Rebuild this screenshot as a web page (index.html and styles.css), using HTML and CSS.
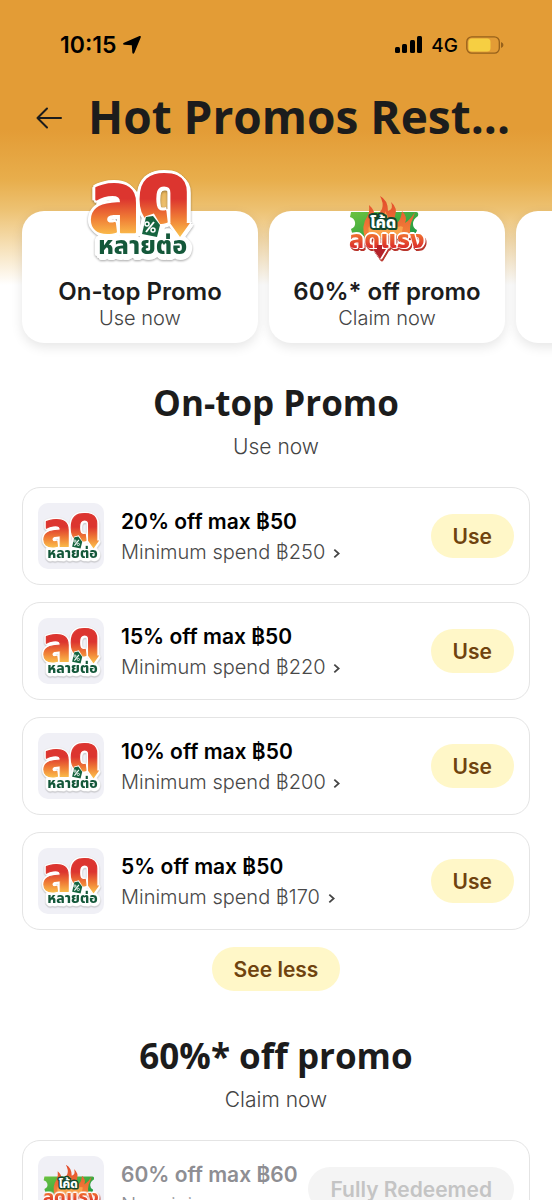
FILE: index.html
```html
<!DOCTYPE html>
<html lang="en">
  <head>
    <meta charset="UTF-8" />
    <meta name="viewport" content="width=device-width, initial-scale=1.0" />
    <title>Hot Promos</title>
    <link rel="stylesheet" href="styles.css">
  </head>
  <body>
    <!-- shared logos -->
    <svg class="defs" width="0" height="0" aria-hidden="true">
      <defs>
        <linearGradient id="redFade" gradientUnits="userSpaceOnUse" x1="0" y1="14" x2="0" y2="76">
          <stop offset="0.4" stop-color="#dc352f" />
          <stop offset="0.7" stop-color="#ef7a35" />
          <stop offset="1" stop-color="#fbc04c" />
        </linearGradient>
        <linearGradient id="flame" x1="0" y1="0" x2="0" y2="1">
          <stop offset="0" stop-color="#e2472a" />
          <stop offset="1" stop-color="#f58a3c" />
        </linearGradient>
        <linearGradient id="ticket" x1="0" y1="0" x2="1" y2="1">
          <stop offset="0" stop-color="#6cc23f" />
          <stop offset="1" stop-color="#149444" />
        </linearGradient>
        <linearGradient id="hot" gradientUnits="userSpaceOnUse" x1="0" y1="50" x2="0" y2="68">
          <stop offset="0" stop-color="#f58232" />
          <stop offset="1" stop-color="#d8262b" />
        </linearGradient>
      </defs>
      <symbol id="logo-ontop" viewBox="15 5 110 100">
        <g class="sticker">
          <text class="thai big-letter" x="19" y="72" font-size="85">ล</text>
          <text class="thai big-letter" x="67" y="62" font-size="85">ด</text>
          <path d="M102 58h13v5h5l-10 14-10-14h2z" fill="url(#redFade)" />
          <path d="M77 58l6-2 6 10-2 10-14-2z" fill="#fff" stroke="#fff" stroke-width="4" />
          <path d="M76 57l7-1 7 9-3 12-15-3z" fill="#16643f" />
          <path d="M84 62l-8 10" stroke="#fff" stroke-width="2" />
          <circle cx="77" cy="64" r="2" fill="none" stroke="#fff" stroke-width="1.5" />
          <circle cx="83" cy="70" r="2" fill="none" stroke="#fff" stroke-width="1.5" />
          <text class="thai small" x="28" y="94" font-size="25" fill="#14583a">หลายต่อ</text>
        </g>
      </symbol>
      <symbol id="logo-code" viewBox="16 12 84 72">
        <path d="M22 31h65q3 0 2 4-5 3-5 8 0 4 4 6l-3 10H25l-3-11q5-2 4-7-1-4-5-5z" fill="url(#ticket)" />
        <path d="M36 58Q32 44 38 36Q41 31 40 24Q46 29 46 37Q50 33 53 28Q55 22 51 15Q59 19 59 30Q65 28 62 21Q69 27 66 35Q65 40 69 41Q72 38 73 30Q79 36 76 42Q82 38 86 31Q84 38 82 42Q80 48 82 56Z" fill="url(#flame)" />
        <path d="M41 56Q37 46 43 40Q45 47 49 43Q57 38 56 30Q62 40 60 45Q66 42 66 48Q70 44 74 46Q72 52 73 58Z" fill="#f9a34c" />
        <text class="thai dark" x="41" y="47" font-size="16">โค้ด</text>
        <g class="sticker red">
          <text class="thai" x="20" y="67" font-size="25" fill="url(#hot)">ลดแรง</text>
          <path d="M48 64h5v4h4l-6 10-7-10h4z" fill="#b5222a" />
        </g>
      </symbol>
    </svg>

    <div class="screen">
      <header class="top">
        <div class="status">
          <div class="status-left">
            <span>10:15</span>
            <svg width="20" height="20" viewBox="0 0 20 20"><path d="M17.500 1Q19.500 0.500 18.700 2.500L12.500 17.500Q11 20 10.300 17.500L9.800 10.300L2.300 9.800Q0 9 2 7.700Z" /></svg>
          </div>
          <div class="status-right">
            <svg width="28" height="18" viewBox="0 0 28 18"><rect x="0" y="11" width="5" height="6" rx="1.500" /><rect x="7" y="8" width="5" height="9" rx="1.500" /><rect x="15" y="4" width="5" height="13" rx="1.500" /><rect x="22" y="0" width="5" height="17" rx="1.500" /></svg>
            <span class="net">4G</span>
            <svg width="38" height="18" viewBox="0 0 38 18"><rect x="0.800" y="0.800" width="32.500" height="16.400" rx="5" fill="none" stroke="#96611b" stroke-width="1.300" /><rect x="2.500" y="2.500" width="22" height="13" rx="3.500" fill="#f6cf42" /><path d="M35 6v6q2.500-1 2.500-3T35 6z" fill="#96611b" /></svg>
          </div>
        </div>
        <div class="title-row">
          <button class="back" aria-label="Back">
            <svg width="26" height="22" viewBox="0 0 26 22"><path d="M11 1.500L1.500 11L11 20.500M1.500 11H25" fill="none" stroke="#1c1c1c" stroke-width="2" stroke-linecap="round" stroke-linejoin="round" /></svg>
          </button>
          <h1>Hot Promos Rest...</h1>
        </div>
      </header>

      <nav class="tabs">
        <a class="tab" href="#ontop">
          <svg class="tab-logo big"><use href="#logo-ontop" /></svg>
          <strong>On-top Promo</strong>
          <span>Use now</span>
        </a>
        <a class="tab" href="#sixty">
          <svg class="tab-logo"><use href="#logo-code" /></svg>
          <strong>60%* off promo</strong>
          <span>Claim now</span>
        </a>
        <a class="tab" href="#more" aria-label="More promos"></a>
      </nav>

      <section class="group" id="ontop">
        <h2>On-top Promo</h2>
        <p class="sub">Use now</p>
        <ul class="coupons">
          <li class="coupon">
            <div class="thumb"><svg><use href="#logo-ontop" /></svg></div>
            <div class="info">
              <h3>20% off max ฿50</h3>
              <p>Minimum spend ฿250 <svg class="chev" viewBox="0 0 8 12"><path d="M1.500 1.500L6.500 6L1.500 10.500" /></svg></p>
            </div>
            <button class="pill">Use</button>
          </li>
          <li class="coupon">
            <div class="thumb"><svg><use href="#logo-ontop" /></svg></div>
            <div class="info">
              <h3>15% off max ฿50</h3>
              <p>Minimum spend ฿220 <svg class="chev" viewBox="0 0 8 12"><path d="M1.500 1.500L6.500 6L1.500 10.500" /></svg></p>
            </div>
            <button class="pill">Use</button>
          </li>
          <li class="coupon">
            <div class="thumb"><svg><use href="#logo-ontop" /></svg></div>
            <div class="info">
              <h3>10% off max ฿50</h3>
              <p>Minimum spend ฿200 <svg class="chev" viewBox="0 0 8 12"><path d="M1.500 1.500L6.500 6L1.500 10.500" /></svg></p>
            </div>
            <button class="pill">Use</button>
          </li>
          <li class="coupon">
            <div class="thumb"><svg><use href="#logo-ontop" /></svg></div>
            <div class="info">
              <h3>5% off max ฿50</h3>
              <p>Minimum spend ฿170 <svg class="chev" viewBox="0 0 8 12"><path d="M1.500 1.500L6.500 6L1.500 10.500" /></svg></p>
            </div>
            <button class="pill">Use</button>
          </li>
        </ul>
        <button class="pill less">See less</button>
      </section>

      <section class="group" id="sixty">
        <h2>60%* off promo</h2>
        <p class="sub">Claim now</p>
        <ul class="coupons">
          <li class="coupon off">
            <div class="thumb"><svg><use href="#logo-code" /></svg></div>
            <div class="info">
              <h3>60% off max ฿60</h3>
              <p>No minimum</p>
            </div>
            <button class="pill" disabled>Fully Redeemed</button>
          </li>
        </ul>
      </section>
    </div>
  </body>
</html>
```

FILE: styles.css
```css
* {
  margin: 0;
  padding: 0;
  box-sizing: border-box;
}
body {
  font-family: Inter, "Liberation Sans", sans-serif;
  color: #1c1c1c;
  background-color: #fff;
}
a {
  text-decoration: none;
  color: inherit;
}
li {
  list-style: none;
}
button {
  border: 0;
  background: none;
  font-family: inherit;
}
svg,
symbol {
  overflow: visible;
}
.defs {
  position: absolute;
}
.screen {
  height: 100vh;
  overflow-x: hidden;
  overflow-y: auto;
  scrollbar-width: none;
  background: linear-gradient(#e39c36 0, #e39c36 130px, #e8ae4c 180px, #edc273 210px, #f6dfb4 245px, #fff 285px);
}

/* status bar + title */
.status {
  display: flex;
  justify-content: space-between;
  align-items: center;
  height: 90px;
  padding: 0 48px 0 60px;
  color: #000;
}
.status-left,
.status-right {
  display: flex;
  align-items: center;
  gap: 6px;
  font-size: 23px;
  font-weight: 600;
}
.status-right {
  gap: 8px;
}
.net {
  font-size: 19px;
  font-weight: 500;
}
.title-row {
  display: flex;
  align-items: center;
  gap: 26px;
  height: 56px;
  padding: 0 36px;
}
.back {
  display: flex;
}
h1 {
  padding-bottom: 4px;
  font-family: "Open Sans", sans-serif;
  font-size: 46px;
  font-weight: 700;
  line-height: 52px;
  white-space: nowrap;
}

/* promo tabs */
.tabs {
  display: flex;
  gap: 11px;
  padding: 65px 0 30px 22px;
  overflow: hidden;
}
.tab {
  display: flex;
  flex: 0 0 236px;
  flex-direction: column;
  align-items: center;
  justify-content: flex-end;
  height: 132px;
  padding-bottom: 13px;
  border-radius: 22px;
  background-color: #fff;
  box-shadow: 0 4px 12px rgba(0, 0, 0, 0.1);
  position: relative;
}
.tab-logo {
  position: absolute;
  top: -18px;
  width: 84px;
  height: 72px;
}
.tab-logo.big {
  top: -46px;
  width: 110px;
  height: 100px;
}
.tab strong {
  font-size: 24px;
  font-weight: 600;
  line-height: 28px;
}
.tab span {
  font-size: 20px;
  font-weight: 350;
  line-height: 24px;
  color: #444;
}

/* coupon groups */
.group {
  display: flex;
  flex-direction: column;
  align-items: center;
  padding: 8px 22px 35px;
}
h2 {
  font-family: "Open Sans", sans-serif;
  font-size: 35px;
  font-weight: 700;
  line-height: 44px;
}
.sub {
  margin: 8px 0 26px;
  font-size: 21px;
  font-weight: 350;
  line-height: 28px;
  color: #444;
}
.coupons {
  display: flex;
  flex-direction: column;
  gap: 17px;
  width: 100%;
}
.coupon {
  display: flex;
  align-items: center;
  height: 98px;
  padding: 0 15px;
  border: 1px solid #e4e4e4;
  border-radius: 18px;
  background-color: #fff;
}
.thumb {
  display: flex;
  width: 66px;
  height: 66px;
  padding: 2px;
  border-radius: 10px;
  background-color: #f0f0f6;
}
.thumb svg {
  width: 100%;
  height: 100%;
}
.info {
  flex: 1;
  padding: 1px 0 0 17px;
  white-space: nowrap;
}
h3 {
  font-size: 21px;
  font-weight: 600;
  line-height: 30px;
  color: #000;
}
.info p {
  font-size: 20px;
  font-weight: 350;
  line-height: 30px;
  color: #484848;
}
.chev {
  width: 7px;
  height: 11px;
  margin-left: 2px;
  fill: none;
  stroke: #444;
  stroke-width: 2;
}
.pill {
  height: 44px;
  padding: 0 22px;
  border-radius: 22px;
  background-color: #fff7c8;
  font-size: 21px;
  font-weight: 600;
  color: #6f430f;
}
.less {
  margin-top: 17px;
}
.off h3,
.off p {
  color: #8e8e93;
}
.off .pill {
  background-color: #f4f4f4;
  color: #c4c4c4;
}

/* logo lettering */
.thai {
  font-family: "Noto Sans Thai", "Noto Sans", sans-serif;
  font-weight: 800;
}
.big-letter {
  fill: url(#redFade);
  stroke: url(#redFade);
  stroke-width: 2px;
  stroke-linejoin: round;
}
.sticker {
  filter: drop-shadow(2px 2px 0 #fff) drop-shadow(-2px -2px 0 #fff) drop-shadow(-1px 2px 0 #fff) drop-shadow(2px -1px 0 #fff) drop-shadow(0 1px 1px rgba(0, 0, 0, 0.35));
}
.sticker.red {
  filter: drop-shadow(1px 1px 0 #fff) drop-shadow(-1px -1px 0 #fff) drop-shadow(1px -1px 0 #fff) drop-shadow(1px 2px 0 #b8352c);
}
.small {
  stroke: #fff;
  stroke-width: 4px;
  stroke-linejoin: round;
  paint-order: stroke;
}
.dark {
  fill: #fff;
  stroke: #12472e;
  stroke-width: 4px;
  stroke-linejoin: round;
  paint-order: stroke;
}
```
